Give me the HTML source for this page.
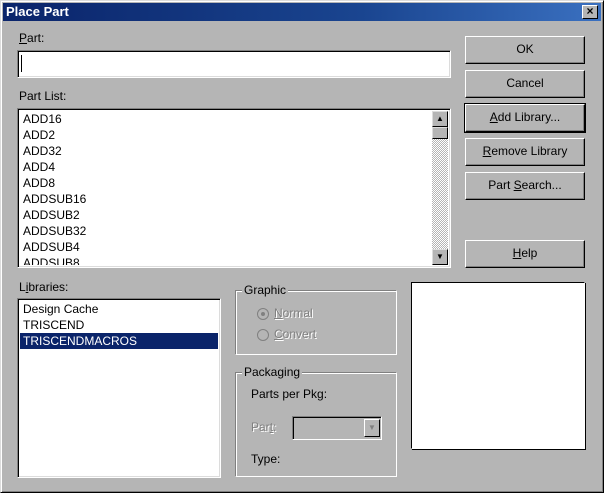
<!DOCTYPE html>
<html><head><style>
*{box-sizing:border-box;margin:0;padding:0}
body{width:604px;height:493px;overflow:hidden;background:#b5b5b5;font-family:"Liberation Sans",sans-serif;font-size:12px;color:#000;position:relative}
.win{position:absolute;left:0;top:0;width:604px;height:493px;border:1px solid;border-color:#dcdcdc #000 #000 #dcdcdc;box-shadow:inset 1px 1px 0 #fff,inset -1px -1px 0 #808080}
.title{position:absolute;left:3px;top:3px;width:598px;height:18px;background:linear-gradient(90deg,#0a246a,#1a4590 60%,#3a70c0);color:#fff;font-weight:bold;font-size:13px;line-height:18px;padding-left:3px}
.x{position:absolute;right:3px;top:2px;width:16px;height:14px;background:#b5b5b5;border:1px solid;border-color:#fff #000 #000 #fff;color:#000;font-size:12px;line-height:11px;text-align:center;font-weight:bold}
.a{position:absolute}
.sunk{position:absolute;background:#fff;border:1px solid;border-color:#808080 #fff #fff #808080;box-shadow:inset 1px 1px 0 #000,inset -1px -1px 0 #dcdcdc}
.btn{position:absolute;left:465px;width:120px;height:28px;border:1px solid;border-color:#fff #000 #000 #fff;box-shadow:inset -1px -1px 0 #808080;text-align:center;line-height:25px;font-size:12px}
.btn.def{outline:1px solid #000;}
.item{height:16px;line-height:16px;padding-left:3px}
.grp{position:absolute;border:1px solid;border-color:#808080 #fff #fff #808080;box-shadow:inset 1px 1px 0 #fff,1px 1px 0 #808080 inset}
.glab{position:absolute;background:#b5b5b5;padding:0 2px;top:-8px;left:6px}
.dis{color:#808080;text-shadow:1px 1px 0 #fff}
.radio{position:absolute;width:12px;height:12px;border-radius:50%;border:1px solid #808080;background:#b5b5b5}
</style></head><body>
<div class="win"></div>
<div class="title">Place Part<div class="x">×</div></div>
<div class="a" style="left:19px;top:31px"><u>P</u>art:</div>
<div class="sunk" style="left:17px;top:50px;width:434px;height:28px"><div style="position:absolute;left:3px;top:4px;width:1px;height:17px;background:#000"></div></div>
<div class="a" style="left:19px;top:89px">Part List:</div>
<div class="sunk" style="left:17px;top:108px;width:434px;height:160px;padding:2px">
<div class="item">ADD16</div><div class="item">ADD2</div><div class="item">ADD32</div><div class="item">ADD4</div><div class="item">ADD8</div><div class="item">ADDSUB16</div><div class="item">ADDSUB2</div><div class="item">ADDSUB32</div><div class="item">ADDSUB4</div><div class="item" style="height:10px;overflow:hidden">ADDSUB8</div>
<div style="position:absolute;right:2px;top:2px;width:16px;height:154px;background:repeating-conic-gradient(#fff 0 25%,#b5b5b5 0 50%) 0 0/2px 2px"></div>
<div style="position:absolute;right:2px;top:2px;width:16px;height:16px;background:#b5b5b5;border:1px solid;border-color:#dcdcdc #000 #000 #dcdcdc;font-size:8px;text-align:center;line-height:13px">▲</div>
<div style="position:absolute;right:2px;top:18px;width:16px;height:12px;background:#b5b5b5;border:1px solid;border-color:#dcdcdc #000 #000 #dcdcdc"></div>
<div style="position:absolute;right:2px;bottom:2px;width:16px;height:16px;background:#b5b5b5;border:1px solid;border-color:#dcdcdc #000 #000 #dcdcdc;font-size:8px;text-align:center;line-height:13px">▼</div>
</div>
<div class="btn" style="top:36px">OK</div>
<div class="btn" style="top:70px">Cancel</div>
<div class="btn def" style="top:104px"><u>A</u>dd Library...</div>
<div class="btn" style="top:138px"><u>R</u>emove Library</div>
<div class="btn" style="top:172px">Part <u>S</u>earch...</div>
<div class="btn" style="top:240px"><u>H</u>elp</div>
<div class="a" style="left:19px;top:280px">L<u>i</u>braries:</div>
<div class="sunk" style="left:17px;top:298px;width:204px;height:180px;padding:2px">
<div class="item">Design Cache</div><div class="item">TRISCEND</div><div class="item" style="background:#0a246a;color:#fff">TRISCENDMACROS</div>
</div>
<div class="grp" style="left:235px;top:290px;width:162px;height:65px"><div class="glab">Graphic</div>
<div class="radio" style="left:21px;top:17px"><div style="width:4px;height:4px;background:#808080;border-radius:50%;margin:3px"></div></div>
<div class="a dis" style="left:38px;top:15px"><u>N</u>ormal</div>
<div class="radio" style="left:21px;top:38px"></div>
<div class="a dis" style="left:38px;top:36px"><u>C</u>onvert</div>
</div>
<div class="grp" style="left:235px;top:372px;width:162px;height:105px"><div class="glab">Packaging</div>
<div class="a" style="left:15px;top:14px">Parts per Pkg:</div>
<div class="a dis" style="left:15px;top:47px">Par<u>t</u>:</div>
<div style="position:absolute;left:56px;top:43px;width:90px;height:24px;border:1px solid;border-color:#808080 #fff #fff #808080;box-shadow:inset 1px 1px 0 #000">
<div style="position:absolute;right:1px;top:2px;width:16px;height:18px;border:1px solid;border-color:#fff #000 #000 #fff;font-size:8px;color:#808080;text-align:center;line-height:16px">▼</div></div>
<div class="a" style="left:15px;top:79px">Type:</div>
</div>
<div style="position:absolute;left:411px;top:282px;width:174px;height:167px;background:#fff;border:1px solid #000;border-right-color:#fff;border-bottom-color:#fff;box-shadow:1px 1px 0 #000"></div>
</body></html>
